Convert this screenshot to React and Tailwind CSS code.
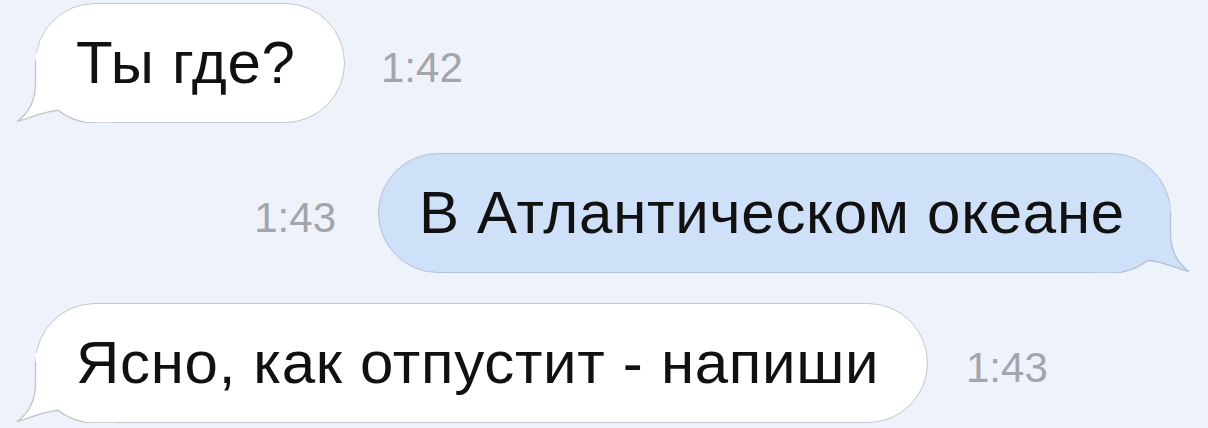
import React from "react";

const Tail = ({ side, fill, stroke }) => {
  const flip = side === "right";
  return (
    <svg
      width="100"
      height="70"
      viewBox="0 0 100 70"
      className={`absolute -bottom-px ${flip ? "-right-[21px] -scale-x-100" : "-left-[21px]"}`}
    >
      <path
        d="M20.5,0 V30 C20.5,48 14,60 2,68.5 C12,66 30,58 43,57.2 A60,60 0 0 0 80,70 H100 V0 Z"
        fill={fill}
      />
      <path
        d="M20.5,8 V30 C20.5,48 14,60 2,68.5 C12,66 30,58 43,57.2 A60,60 0 0 0 80,70 H100"
        fill="none"
        stroke={stroke}
        strokeWidth="1.4"
      />
    </svg>
  );
};

const Bubble = ({ side = "left", blue, width, children }) => {
  const fill = blue ? "#cfe0f9" : "#ffffff";
  const stroke = blue ? "#b3c2d8" : "#c3c6cc";
  return (
    <div
      className={`relative flex h-[120px] shrink-0 items-center rounded-full border pl-[40px] ${
        blue ? "border-[#b3c2d8] bg-[#cfe0f9]" : "border-[#c3c6cc] bg-white"
      } ${width}`}
    >
      <Tail side={side} fill={fill} stroke={stroke} />
      <span className="relative whitespace-nowrap text-[60px] leading-none tracking-[0.7px] text-[#111111]">
        {children}
      </span>
    </div>
  );
};

const Time = ({ children, className }) => (
  <span className={`mt-[9px] whitespace-nowrap text-[42px] leading-none text-[#a2a5ab] ${className}`}>
    {children}
  </span>
);

export default function App() {
  return (
    <div className="h-[428px] w-full overflow-hidden bg-[#eef2fa] font-['Liberation_Sans',Arial,sans-serif]">
      <div className="flex flex-col gap-[30px] pl-[35px] pr-[37px] pt-[3px]">
        <div className="flex items-center">
          <Bubble width="w-[310px]">Ты где?</Bubble>
          <Time className="ml-[36px]">1:42</Time>
        </div>

        <div className="flex items-center justify-end">
          <Time className="mr-[42px]">1:43</Time>
          <Bubble side="right" blue width="w-[793px]">
            В Атлантическом океане
          </Bubble>
        </div>

        <div className="flex items-center">
          <Bubble width="w-[893px]">Ясно, как отпустит - напиши</Bubble>
          <Time className="ml-[38px]">1:43</Time>
        </div>
      </div>
    </div>
  );
}
